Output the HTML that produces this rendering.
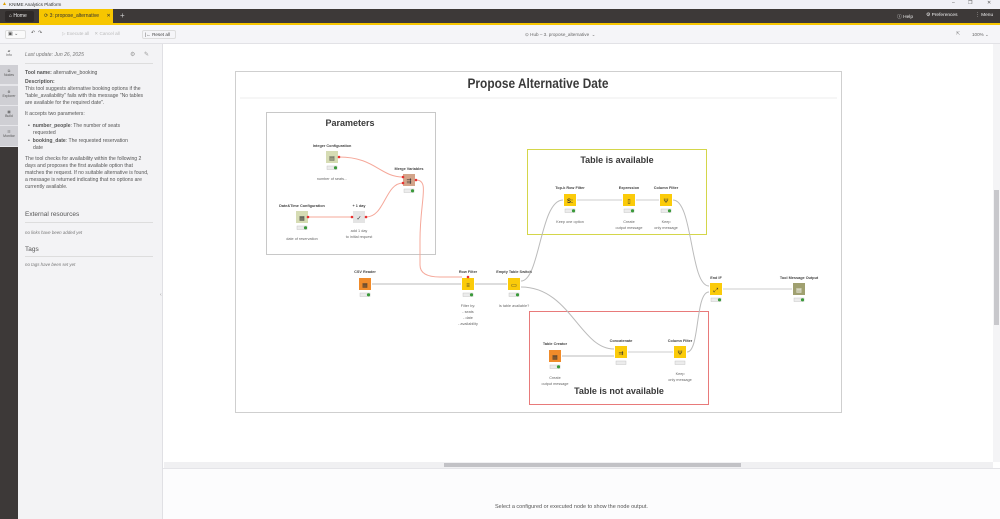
<!DOCTYPE html>
<html><head><meta charset="utf-8"><style>
*{margin:0;padding:0;box-sizing:border-box}
body{width:1000px;height:519px;overflow:hidden;font-family:"Liberation Sans",sans-serif;background:#fff;position:relative;color:#333}
.a{position:absolute}
.lp div{position:absolute;left:25px;font-size:5.1px;color:#555;white-space:nowrap}
</style></head><body>
<div class="a" style="left:0;top:0;width:1000px;height:9px;background:#f0f0f6"></div>
<div class="a" style="left:2px;top:1px;font-size:5px;color:#e0a000">▲</div>
<div class="a" style="left:9px;top:1.5px;font-size:4.6px;color:#333">KNIME Analytics Platform</div>
<div class="a" style="left:952px;top:0;font-size:5px;color:#555">–</div>
<div class="a" style="left:968px;top:0;font-size:5px;color:#555">❐</div>
<div class="a" style="left:987px;top:0;font-size:5px;color:#555">✕</div>
<div class="a" style="left:0;top:9px;width:1000px;height:15px;background:#3d3938"></div>
<div class="a" style="left:0;top:23px;width:1000px;height:2px;background:#f7c600"></div>
<div class="a" style="left:5px;top:11px;width:29px;height:11px;background:#2e2a29;border-radius:2px;color:#eee;font-size:5px;line-height:11px;padding-left:4px">⌂ Home</div>
<div class="a" style="left:39px;top:9px;width:74px;height:15px;background:#f7c600;color:#333;font-size:5px;line-height:15px;padding-left:5px">⟳ 3: propose_alternative <span style="margin-left:6px">✕</span></div>
<div class="a" style="left:120px;top:11px;color:#ccc;font-size:8px">+</div>
<div class="a" style="left:897px;top:13px;color:#eee;font-size:4.8px">ⓘ Help</div>
<div class="a" style="left:926px;top:13px;color:#eee;font-size:4.8px">⚙ Preferences</div>
<div class="a" style="left:975px;top:13px;color:#eee;font-size:4.8px">⋮ Menu</div>
<div class="a" style="left:0;top:25px;width:1000px;height:19px;background:#f5f5f8;border-bottom:1px solid #e2e2e6"></div>
<div class="a" style="left:5px;top:30px;width:21px;height:9px;border:1px solid #ddd;border-radius:2px;background:#fafafa;font-size:5px;color:#555;padding-left:2px">▣ ⌄</div>
<div class="a" style="left:31px;top:30px;font-size:5px;color:#555">↶ &nbsp;↷</div>
<div class="a" style="left:62px;top:31px;font-size:4.6px;color:#bbb">▷ Execute all &nbsp;&nbsp; ✕ Cancel all</div>
<div class="a" style="left:142px;top:30px;width:34px;height:9px;border:1px solid #ddd;border-radius:2px;font-size:4.6px;color:#444;padding-left:2px;line-height:8px">|← Reset all</div>
<div class="a" style="left:525px;top:32px;font-size:4.6px;color:#666">⊙ Hub – 3. propose_alternative &nbsp;⌄</div>
<div class="a" style="left:956px;top:31px;font-size:5px;color:#888">⇱</div>
<div class="a" style="left:972px;top:32px;font-size:4.6px;color:#666">100% ⌄</div>
<div class="a" style="left:0;top:44px;width:18px;height:475px;background:#3d3938"></div>
<div class="a" style="left:0;top:44px;width:18px;height:103px;background:#e6e6ea"></div>
<div class="a" style="left:0;top:44px;width:18px;height:21px;background:#f3f3f5;font-size:3.5px;color:#666;text-align:center;padding-top:5px">▰<br>Info</div>
<div class="a" style="left:0;top:65px;width:18px;height:20px;background:#cfcfd4;border-bottom:1px solid #e6e6ea;font-size:3.5px;color:#555;text-align:center;padding-top:4px">⧉<br>Nodes</div>
<div class="a" style="left:0;top:86px;width:18px;height:20px;background:#cfcfd4;border-bottom:1px solid #e6e6ea;font-size:3.5px;color:#555;text-align:center;padding-top:4px">⚙<br>Explorer</div>
<div class="a" style="left:0;top:106px;width:18px;height:20px;background:#cfcfd4;border-bottom:1px solid #e6e6ea;font-size:3.5px;color:#555;text-align:center;padding-top:4px">▦<br>Build</div>
<div class="a" style="left:0;top:126px;width:18px;height:20px;background:#cfcfd4;font-size:3.5px;color:#555;text-align:center;padding-top:4px">☷<br>Monitor</div>
<div class="a lp" style="left:18px;top:44px;width:145px;height:475px;background:#f3f3f5;border-right:1px solid #e0e0e4"></div>
<div class="lp">
<div style="top:52px;font-style:italic;color:#777">Last update: Jun 26, 2025</div>
<div style="left:130px;top:51px;font-size:6px;color:#999">⚙</div>
<div style="left:144px;top:51px;font-size:6px;color:#999">✎</div>
<div class="a" style="left:25px;top:63px;width:128px;height:1px;background:#ddd"></div>
<div style="top:70px"><b>Tool name:</b> alternative_booking</div>
<div style="top:79px"><b>Description:</b></div>
<div style="top:86px">This tool suggests alternative booking options if the</div>
<div style="top:93px">"table_availability" fails with this message "No tables</div>
<div style="top:100px">are available for the required date".</div>
<div style="top:111px">It accepts two parameters:</div>
<div style="left:28px;top:123px">• &nbsp;<b>number_people</b>: The number of seats</div>
<div style="left:33px;top:130px">requested</div>
<div style="left:28px;top:138px">• &nbsp;<b>booking_date</b>: The requested reservation</div>
<div style="left:33px;top:145px">date</div>
<div style="top:156px">The tool checks for availability within the following 2</div>
<div style="top:163px">days and proposes the first available option that</div>
<div style="top:170px">matches the request. If no suitable alternative is found,</div>
<div style="top:177px">a message is returned indicating that no options are</div>
<div style="top:184px">currently available.</div>
<div style="top:211px;font-size:6.5px;color:#555">External resources</div>
<div class="a" style="left:25px;top:222px;width:128px;height:1px;background:#ddd"></div>
<div style="top:230px;font-style:italic;font-size:4.4px;color:#777">no links have been added yet</div>
<div style="top:246px;font-size:6.5px;color:#555">Tags</div>
<div class="a" style="left:25px;top:256px;width:128px;height:1px;background:#ddd"></div>
<div style="top:262px;font-style:italic;font-size:4.4px;color:#777">no tags have been set yet</div>
</div>
<div class="a" style="left:160px;top:292px;font-size:5px;color:#999">‹</div>
<div class="a" style="left:993px;top:44px;width:7px;height:418px;background:#f4f4f6"></div>
<div class="a" style="left:994px;top:190px;width:5px;height:135px;background:#c8c8cc"></div>
<div class="a" style="left:164px;top:462px;width:829px;height:6px;background:#f0f0f2"></div>
<div class="a" style="left:444px;top:463px;width:297px;height:4px;background:#c2c2c6"></div>
<div class="a" style="left:163px;top:468px;width:837px;height:1px;background:#e4e4e8"></div>
<div class="a" style="left:163px;top:469px;width:837px;height:50px;background:#fcfcfd"></div>
<div class="a" style="left:495px;top:504px;font-size:5.5px;color:#555">Select a configured or executed node to show the node output.</div>
<svg class="a" style="left:0;top:0" width="1000" height="519" font-family="Liberation Sans, sans-serif">
<rect x="235.5" y="71.5" width="606" height="341" fill="none" stroke="#cfcfcf"/>
<line x1="240" y1="98" x2="837" y2="98" stroke="#eee"/>
<text x="538" y="88" font-size="13.5" font-weight="bold" fill="#3a3a3a" text-anchor="middle" textLength="141" lengthAdjust="spacingAndGlyphs">Propose Alternative Date</text>
<rect x="266.5" y="112.5" width="169" height="142" fill="none" stroke="#c8c8c8"/>
<text x="350" y="126" font-size="9" font-weight="bold" fill="#3a3a3a" text-anchor="middle">Parameters</text>
<rect x="527.5" y="149.5" width="179" height="85" fill="none" stroke="#d4d64a"/>
<text x="617" y="163" font-size="9" font-weight="bold" fill="#3a3a3a" text-anchor="middle">Table is available</text>
<rect x="529.5" y="311.5" width="179" height="93" fill="none" stroke="#e87a7a"/>
<text x="619" y="394" font-size="9" font-weight="bold" fill="#3a3a3a" text-anchor="middle">Table is not available</text>
<g fill="none" stroke-width="1">
<path d="M339 157 C375 157 380 177 403 177" stroke="#f5a89a"/>
<path d="M308 217 L352 217" stroke="#f5a89a"/>
<path d="M366 217 C385 217 385 183 403 183" stroke="#f5a89a"/>
<path d="M416 180 C430 180 420 200 420 240 L420 265 C420 275 430 277 440 277 L462 277" stroke="#f5a89a"/>
<path d="M372 284 L461 284" stroke="#bbb"/>
<path d="M475 284 L507 284" stroke="#bbb"/>
<path d="M521 281 C540 281 540 200 563 200" stroke="#bbb"/>
<path d="M521 287 C570 287 580 349 614 349" stroke="#bbb"/>
<path d="M577 200 L622 200" stroke="#ccc"/>
<path d="M636 200 L659 200" stroke="#ccc"/>
<path d="M673 200 C693 200 690 286 709 286" stroke="#bbb"/>
<path d="M687 352 C700 352 695 292 709 292" stroke="#bbb"/>
<path d="M723 289 L792 289" stroke="#ccc"/>
<path d="M562 356 L614 356" stroke="#bbb"/>
<path d="M628 352 L673 352" stroke="#ccc"/>
</g>
<g font-size="3.8" font-weight="bold" fill="#444" text-anchor="middle">
<text x="332" y="147">Integer Configuration</text>
<text x="409" y="170">Merge Variables</text>
<text x="302" y="207">Date&amp;Time Configuration</text>
<text x="359" y="207">+ 1 day</text>
<text x="365" y="273">CSV Reader</text>
<text x="468" y="273">Row Filter</text>
<text x="514" y="273">Empty Table Switch</text>
<text x="570" y="189">Top-k Row Filter</text>
<text x="629" y="189">Expression</text>
<text x="666" y="189">Column Filter</text>
<text x="716" y="279">End IF</text>
<text x="799" y="279">Tool Message Output</text>
<text x="555" y="345">Table Creator</text>
<text x="621" y="342">Concatenate</text>
<text x="680" y="342">Column Filter</text>
</g>
<g font-size="3.8" fill="#666" text-anchor="middle">
<text x="332" y="180">number of seats...</text>
<text x="302" y="240">date of reservation</text>
<text x="359" y="232">add 1 day</text><text x="359" y="238">to initial request</text>
<text x="468" y="307">Filter by:</text><text x="468" y="313">- seats</text><text x="468" y="319">- date</text><text x="468" y="325">- availability</text>
<text x="514" y="307">Is table available?</text>
<text x="570" y="223">Keep one option</text>
<text x="629" y="223">Create</text><text x="629" y="229">output message</text>
<text x="666" y="223">Keep</text><text x="666" y="229">only message</text>
<text x="555" y="379">Create</text><text x="555" y="385">output message</text>
<text x="680" y="375">Keep</text><text x="680" y="381">only message</text>
</g>
<g stroke="none">
<rect x="326" y="151" width="12" height="12" fill="#d6dcb4"/>
<rect x="403" y="174" width="12" height="12" fill="#d3a48a"/>
<rect x="296" y="211" width="12" height="12" fill="#d6dcb4"/>
<rect x="353" y="211" width="12" height="12" fill="#e4e4e4"/>
<rect x="359" y="278" width="12" height="12" fill="#f08b2a"/>
<rect x="462" y="278" width="12" height="12" fill="#fbcb0a"/>
<rect x="508" y="278" width="12" height="12" fill="#fbcb0a"/>
<rect x="564" y="194" width="12" height="12" fill="#fbcb0a"/>
<rect x="623" y="194" width="12" height="12" fill="#fbcb0a"/>
<rect x="660" y="194" width="12" height="12" fill="#fbcb0a"/>
<rect x="710" y="283" width="12" height="12" fill="#fbcb0a"/>
<rect x="793" y="283" width="12" height="12" fill="#a0a070"/>
<rect x="549" y="350" width="12" height="12" fill="#f08b2a"/>
<rect x="615" y="346" width="12" height="12" fill="#fbcb0a"/>
<rect x="674" y="346" width="12" height="12" fill="#fbcb0a"/>
</g>
<g font-size="6" fill="#333" text-anchor="middle">
<text x="332" y="160">▤</text><text x="409" y="183">⇶</text><text x="302" y="220">▦</text><text x="359" y="220">✓</text>
<text x="365" y="287">▦</text><text x="468" y="287">≡</text><text x="514" y="287">▭</text>
<text x="570" y="203" font-weight="bold">S:</text><text x="629" y="203">▯</text><text x="666" y="203">Ψ</text>
<text x="716" y="292">⤢</text><text x="799" y="292" fill="#fff">▤</text><text x="555" y="359">▦</text><text x="621" y="355">⇉</text><text x="680" y="355">Ψ</text>
</g>
<g>
<rect x="327" y="166" width="10" height="3.5" fill="#ececec" stroke="#bbb" stroke-width=".4"/><circle cx="335.5" cy="167.8" r="1.6" fill="#3a9a3a"/>
<rect x="404" y="189" width="10" height="3.5" fill="#ececec" stroke="#bbb" stroke-width=".4"/><circle cx="412.5" cy="190.8" r="1.6" fill="#3a9a3a"/>
<rect x="297" y="226" width="10" height="3.5" fill="#ececec" stroke="#bbb" stroke-width=".4"/><circle cx="305.5" cy="227.8" r="1.6" fill="#3a9a3a"/>
<rect x="360" y="293" width="10" height="3.5" fill="#ececec" stroke="#bbb" stroke-width=".4"/><circle cx="368.5" cy="294.8" r="1.6" fill="#3a9a3a"/>
<rect x="463" y="293" width="10" height="3.5" fill="#ececec" stroke="#bbb" stroke-width=".4"/><circle cx="471.5" cy="294.8" r="1.6" fill="#3a9a3a"/>
<rect x="509" y="293" width="10" height="3.5" fill="#ececec" stroke="#bbb" stroke-width=".4"/><circle cx="517.5" cy="294.8" r="1.6" fill="#3a9a3a"/>
<rect x="565" y="209" width="10" height="3.5" fill="#ececec" stroke="#bbb" stroke-width=".4"/><circle cx="573.5" cy="210.8" r="1.6" fill="#3a9a3a"/>
<rect x="624" y="209" width="10" height="3.5" fill="#ececec" stroke="#bbb" stroke-width=".4"/><circle cx="632.5" cy="210.8" r="1.6" fill="#3a9a3a"/>
<rect x="661" y="209" width="10" height="3.5" fill="#ececec" stroke="#bbb" stroke-width=".4"/><circle cx="669.5" cy="210.8" r="1.6" fill="#3a9a3a"/>
<rect x="711" y="298" width="10" height="3.5" fill="#ececec" stroke="#bbb" stroke-width=".4"/><circle cx="719.5" cy="299.8" r="1.6" fill="#3a9a3a"/>
<rect x="794" y="298" width="10" height="3.5" fill="#ececec" stroke="#bbb" stroke-width=".4"/><circle cx="802.5" cy="299.8" r="1.6" fill="#3a9a3a"/>
<rect x="550" y="365" width="10" height="3.5" fill="#ececec" stroke="#bbb" stroke-width=".4"/><circle cx="558.5" cy="366.8" r="1.6" fill="#3a9a3a"/>
<rect x="616" y="361" width="10" height="3.5" fill="#ececec" stroke="#bbb" stroke-width=".4"/>
<rect x="675" y="361" width="10" height="3.5" fill="#ececec" stroke="#bbb" stroke-width=".4"/>
</g>
<g fill="#e83030">
<circle cx="339" cy="157" r="1.3"/><circle cx="403" cy="177" r="1.3"/><circle cx="403" cy="183" r="1.3"/><circle cx="416" cy="180" r="1.3"/>
<circle cx="308" cy="217" r="1.3"/><circle cx="352" cy="217" r="1.3"/><circle cx="366" cy="217" r="1.3"/><circle cx="468" cy="277" r="1.3"/>
</g>
</svg>
</body></html>
